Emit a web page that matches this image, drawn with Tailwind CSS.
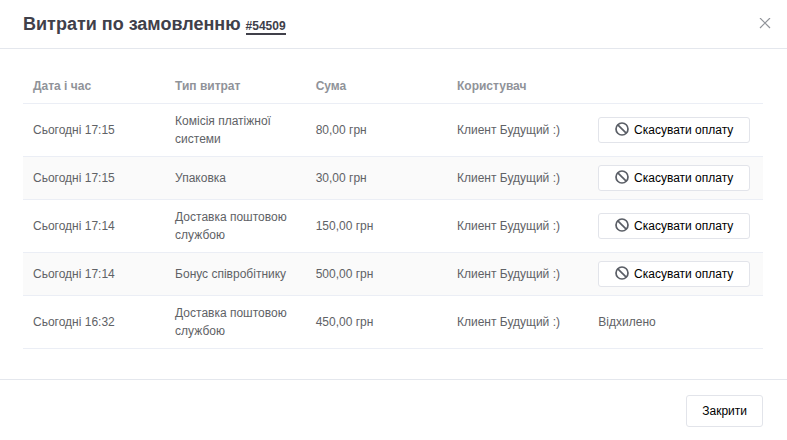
<!DOCTYPE html>
<html lang="uk">
<head>
    <meta charset="utf-8">
    <meta name="viewport" content="width=device-width, initial-scale=1">
    <title>Витрати по замовленню</title>
    <script src="https://cdn.jsdelivr.net/npm/@tailwindcss/browser@4"></script>
</head>
<body class="bg-white font-['Liberation_Sans',Arial,sans-serif] text-xs leading-[18px] text-[#606266]">

    <!-- Header -->
    <header class="flex h-[49px] items-center justify-between border-b border-[#e4e7ed] pl-[23px] pr-4">
        <h1 class="flex items-baseline gap-[5px] text-lg font-bold text-[#40404a]">
            Витрати по замовленню
            <a href="#" class="border-b-2 border-[#40404a] text-xs leading-[14px]">#54509</a>
        </h1>
        <button type="button" aria-label="Закрити вікно" class="text-[#909399]">
            <svg class="size-3" viewBox="0 0 12 12" fill="none" stroke="currentColor" stroke-width="1.2">
                <path d="M1 0l10 10M11 0L1 10" />
            </svg>
        </button>
    </header>

    <!-- Expenses -->
    <main class="pt-5 pr-6 pb-[30px] pl-[23px]">
        <table class="w-full table-fixed border-collapse text-left">
            <colgroup>
                <col class="w-[19.2%]">
                <col class="w-[19%]">
                <col class="w-[19.1%]">
                <col class="w-[19.1%]">
                <col>
            </colgroup>
            <thead class="text-[#909399]">
                <tr class="border-b border-[#ebeef5]">
                    <th class="px-[10px] py-2">Дата і час</th>
                    <th class="px-[10px] py-2">Тип витрат</th>
                    <th class="px-[10px] py-2">Сума</th>
                    <th class="px-[10px] py-2">Користувач</th>
                    <th class="px-[10px] py-2"></th>
                </tr>
            </thead>
            <tbody id="rows"></tbody>
        </table>
    </main>

    <!-- Footer -->
    <footer class="flex justify-end border-t border-[#e4e7ed] py-[15px] pr-6">
        <button type="button" class="h-8 rounded-[3px] border border-[#e2e4ea] px-[15px] text-black">Закрити</button>
    </footer>

    <script>
        const expenses = [
            { date: "Сьогодні 17:15", type: "Комісія платіжної системи", sum: "80,00 грн" },
            { date: "Сьогодні 17:15", type: "Упаковка", sum: "30,00 грн" },
            { date: "Сьогодні 17:14", type: "Доставка поштовою службою", sum: "150,00 грн" },
            { date: "Сьогодні 17:14", type: "Бонус співробітнику", sum: "500,00 грн" },
            { date: "Сьогодні 16:32", type: "Доставка поштовою службою", sum: "450,00 грн", rejected: true },
        ];

        const cancelButton = `
            <button type="button" class="flex h-[26px] w-full items-center justify-center gap-[5px] rounded-[3px] border border-[#e2e4ea] bg-white text-black">
                <svg class="size-[14px] overflow-visible text-[#5a5e66]" viewBox="0 0 14 14" fill="none" stroke="currentColor" stroke-width="1.7">
                    <circle cx="7" cy="6" r="6" />
                    <path d="M2.8 1.8l8.4 8.4" />
                </svg>
                Скасувати оплату
            </button>`;

        document.getElementById("rows").innerHTML = expenses.map(item => `
            <tr class="border-b border-[#ebeef5] even:bg-[#fafafa]">
                <td class="px-[10px] py-2">${item.date}</td>
                <td class="px-[10px] py-2">${item.type}</td>
                <td class="px-[10px] py-2 font-medium">${item.sum}</td>
                <td class="px-[10px] py-2">Клиент Будущий :)</td>
                <td class="py-2 pl-[10px] pr-[13px]">${item.rejected ? "Відхилено" : cancelButton}</td>
            </tr>
        `).join("");
    </script>
</body>
</html>
